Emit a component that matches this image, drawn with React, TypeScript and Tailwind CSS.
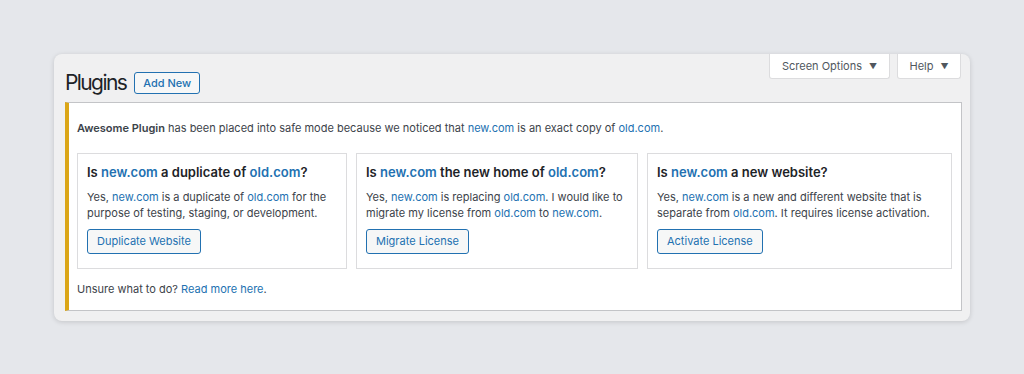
import React from 'react'

const font = { fontFamily: 'Inter, "Noto Sans", sans-serif' }

function L({ children }: { children: React.ReactNode }) {
  return <a className="text-[#2271b1]">{children}</a>
}

function Choice({ title, body, action, width }: { title: React.ReactNode; body: React.ReactNode; action: string; width: string }) {
  return (
    <div className={`${width} bg-white border border-[#dcdcde] px-[9px] pt-[7px] pb-[14px]`}>
      <h2 className="text-[13px] leading-[22px] font-semibold text-[#1d2327]">{title}</h2>
      <p className="mt-[6px] text-[11px] leading-[16px] text-[#3c434a]">{body}</p>
      <button className="mt-[8px] h-[25px] px-[9px] border border-[#2271b1] rounded-[3px] bg-[#f6f7f7] text-[11px] text-[#2271b1]">
        {action}
      </button>
    </div>
  )
}

export default function App() {
  return (
    <div className="min-h-screen bg-[#e5e7eb] pt-[54px] pl-[54px] pr-[54px]" style={font}>
      <div className="bg-[#f0f0f1] rounded-[8px] shadow-[0_1px_5px_rgba(0,0,0,0.15)] pl-[11px] pr-[8px] pb-[10px]">
        <div className="flex items-start justify-between">
          <div className="flex items-center gap-[8px] pt-[18px]">
            <h1 className="text-[21px] leading-[22px] tracking-[-1.6px] text-[#1d2327]">Plugins</h1>
            <button className="h-[22px] px-[8px] border border-[#2271b1] rounded-[3px] bg-[#f6f7f7] text-[11px] font-medium text-[#2271b1]">
              Add New
            </button>
          </div>
          <div className="flex gap-[7px] pr-[1px]">
            <button className="h-[25px] w-[121px] bg-white border border-t-0 border-[#dcdcde] rounded-b-[3px] text-[11px] text-[#50575e] flex items-center justify-center gap-[7px]">
              Screen Options <span className="text-[8px]">▼</span>
            </button>
            <button className="h-[25px] w-[64px] bg-white border border-t-0 border-[#dcdcde] rounded-b-[3px] text-[11px] text-[#50575e] flex items-center justify-center gap-[7px]">
              Help <span className="text-[8px]">▼</span>
            </button>
          </div>
        </div>
        <div className="mt-[8px] bg-white border border-[#c3c4c7] border-l-4 border-l-[#dba617] pl-[8px] pr-[9px] pt-[15px] pb-[11px]">
          <p className="text-[11px] leading-[20px] text-[#3c434a]">
            <strong className="font-semibold">Awesome Plugin</strong> has been placed into safe mode because we noticed that <L>new.com</L> is an exact copy of <L>old.com</L>.
          </p>
          <div className="mt-[15px] flex gap-[9px]">
            <Choice
              width="w-[270px]"
              title={<>Is <L>new.com</L> a duplicate of <L>old.com</L>?</>}
              body={<>Yes, <L>new.com</L> is a duplicate of <L>old.com</L> for the purpose of testing, staging, or development.</>}
              action="Duplicate Website"
            />
            <Choice
              width="w-[282px]"
              title={<>Is <L>new.com</L> the new home of <L>old.com</L>?</>}
              body={<>Yes, <L>new.com</L> is replacing <L>old.com</L>. I would like to migrate my license from <L>old.com</L> to <L>new.com</L>.</>}
              action="Migrate License"
            />
            <Choice
              width="w-[305px]"
              title={<>Is <L>new.com</L> a new website?</>}
              body={<>Yes, <L>new.com</L> is a new and different website that is separate from <L>old.com</L>. It requires license activation.</>}
              action="Activate License"
            />
          </div>
          <p className="mt-[10px] text-[11px] leading-[20px] text-[#3c434a]">
            Unsure what to do? <L>Read more here</L>.
          </p>
        </div>
      </div>
    </div>
  )
}
